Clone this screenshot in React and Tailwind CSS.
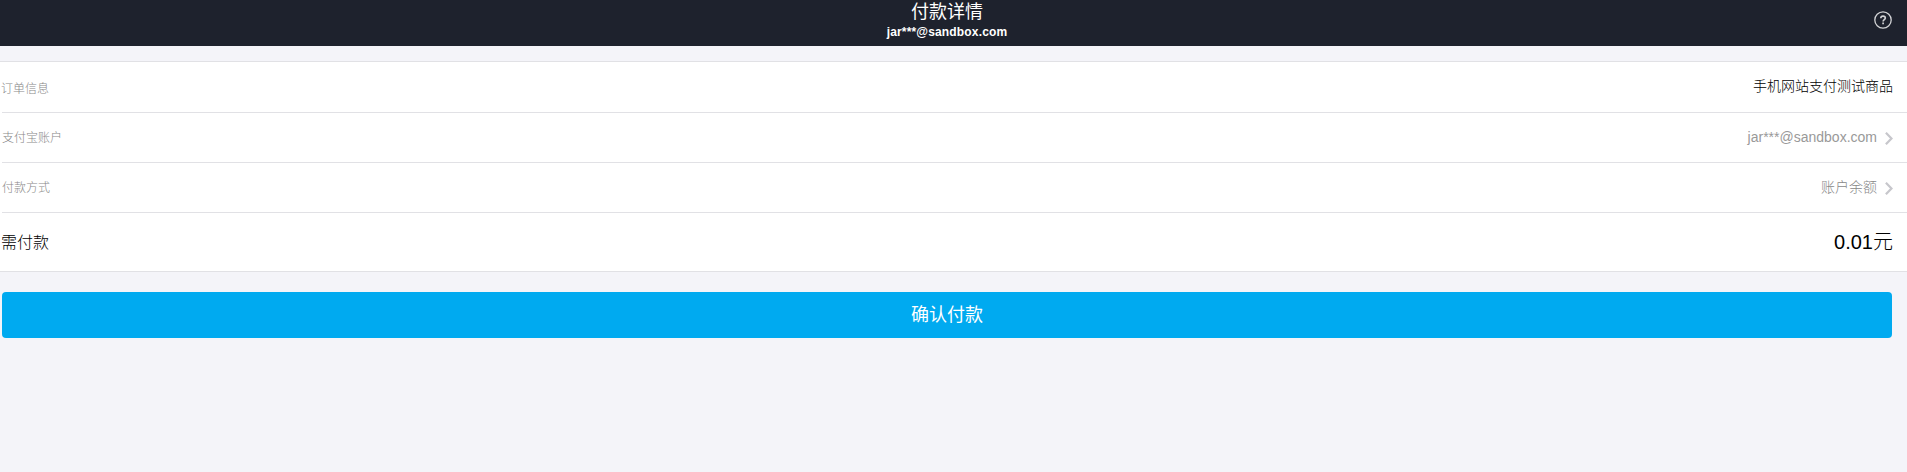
function Chevron() {
  return (
    <svg className="mt-[4px] ml-2 h-[13px] w-2 shrink-0" viewBox="0 0 8 13" fill="none" stroke="#c7c7cc" strokeWidth="2.3">
      <path d="M0.9 0.8 6.5 6.5 0.9 12.2" />
    </svg>
  );
}

function HelpIcon() {
  return (
    <svg className="h-[18px] w-[18px]" viewBox="0 0 18 18" fill="none" stroke="#d2d3d5">
      <circle cx="9" cy="9" r="8.2" strokeWidth="1.3" />
      <path d="M6.8 7.3C6.8 5.9 7.7 5.1 9 5.1s2.3.8 2.3 2c0 1.6-2.2 1.7-2.2 3.5" strokeWidth="1.6" />
      <path d="M9.1 11.6v1.6" strokeWidth="1.7" />
    </svg>
  );
}

export default function App() {
  return (
    <div className="h-[472px] overflow-hidden bg-[#f4f4f9] font-['Liberation_Sans','Noto_Sans_CJK_SC',sans-serif]">
      <header className="flex h-[46px] bg-[#1e222d]">
        <div className="w-5 shrink-0" />
        <div className="flex-1 text-center text-white">
          <h1 className="pt-[1px] text-[18px] leading-[22px] font-normal">付款详情</h1>
          <p className="text-[12px] leading-[18px] font-bold tracking-[0.16px]">jar***@sandbox.com</p>
        </div>
        <div className="w-[33px] shrink-0 pt-[11px]">
          <HelpIcon />
        </div>
      </header>

      <main className="pt-[15px]">
        <section className="border-y border-[#e1e1e5] bg-white pl-[2px]">
          <div className="flex h-[51px] items-center justify-between border-b border-[#e1e1e5] pr-[14px]">
            <span className="-ml-px pt-[4px] text-[12px] leading-4 font-light text-[#888]">订单信息</span>
            <span className="pb-[2px] text-[14px] leading-5 font-light text-black">手机网站支付测试商品</span>
          </div>
          <div className="flex h-[50px] items-center justify-between border-b border-[#e1e1e5] pr-[14px]">
            <span className="text-[12px] leading-4 font-light text-[#888]">支付宝账户</span>
            <span className="flex items-center pb-[2px] text-[14px] leading-5 text-[#999]">
              jar***@sandbox.com
              <Chevron />
            </span>
          </div>
          <div className="flex h-[50px] items-center justify-between border-b border-[#e1e1e5] pr-[14px]">
            <span className="text-[12px] leading-4 font-light text-[#888]">付款方式</span>
            <span className="flex items-center pb-[2px] text-[14px] leading-5 font-light text-[#888]">
              账户余额
              <Chevron />
            </span>
          </div>
          <div className="flex h-[58px] items-center justify-between pr-[14px]">
            <span className="-ml-px pt-[2px] text-[16px] leading-6 font-light text-black">需付款</span>
            <span className="text-[20px] leading-7 font-light text-black">0.01元</span>
          </div>
        </section>

        <div className="mt-5 mr-[15px] ml-[2px]">
          <button className="block h-[46px] w-full rounded bg-[#00aaf0] text-[18px] font-normal text-white">确认付款</button>
        </div>
      </main>
    </div>
  );
}
